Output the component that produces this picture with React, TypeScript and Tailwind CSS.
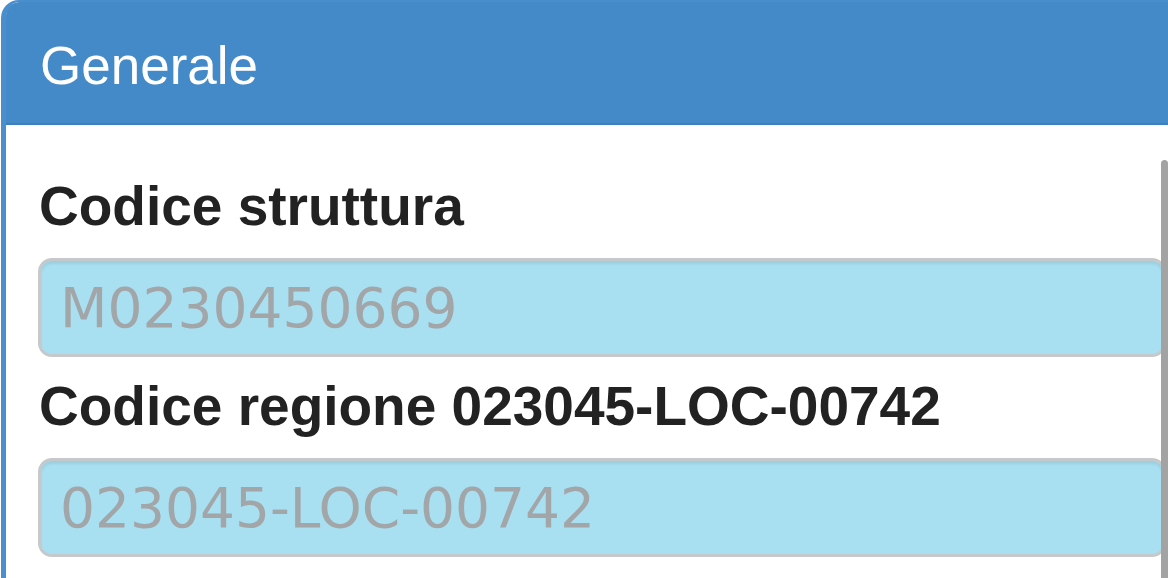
import React from 'react';

const fields = [
  { label: 'Codice struttura', value: 'M0230450669' },
  { label: 'Codice regione 023045-LOC-00742', value: '023045-LOC-00742' },
];

const App = () => {
  return (
    <div className="relative w-[1168px] h-[578px] overflow-hidden bg-white">
      <div className="ml-[1px] min-h-[620px] w-[1210px] rounded-tl-[18px] border-l-[5px] border-t-[2px] border-[#4a8fcd] bg-white">
        <div className="rounded-tl-[14px] border-b-[2px] border-[#3d80c0] bg-[#4489c8] pl-[34px] pt-[35px] pb-[29px]">
          <h3 className="font-['Liberation_Sans',Arial,sans-serif] text-[53px] leading-[57px] text-white">Generale</h3>
        </div>

        <div className="px-[32px] pt-[52px]">
          {fields.map((f, i) => (
            <div key={f.label} className={i === 0 ? 'mb-[20px]' : ''}>
              <label className="mb-[22px] ml-[1px] block font-['Liberation_Sans',Arial,sans-serif] text-[55px] font-bold leading-[59px] text-[#222]">
                {f.label}
              </label>
              <input
                type="text"
                readOnly
                value={f.value}
                className="block h-[99px] w-[1128px] rounded-[14px] border-[3px] border-[#c6c9cb] bg-[#a8e0f2] pl-[19px] font-['DejaVu_Sans',Verdana,sans-serif] text-[55px] text-[#a3a6a8] shadow-[inset_0_3px_3px_rgba(0,0,0,0.08)] outline-none"
              />
            </div>
          ))}
        </div>
      </div>

      {/* overlay scrollbar */}
      <div className="absolute right-0 top-[160px] h-[430px] w-[7px] rounded-t-full bg-[#a3a3a3]" />
    </div>
  );
};

export default App;
